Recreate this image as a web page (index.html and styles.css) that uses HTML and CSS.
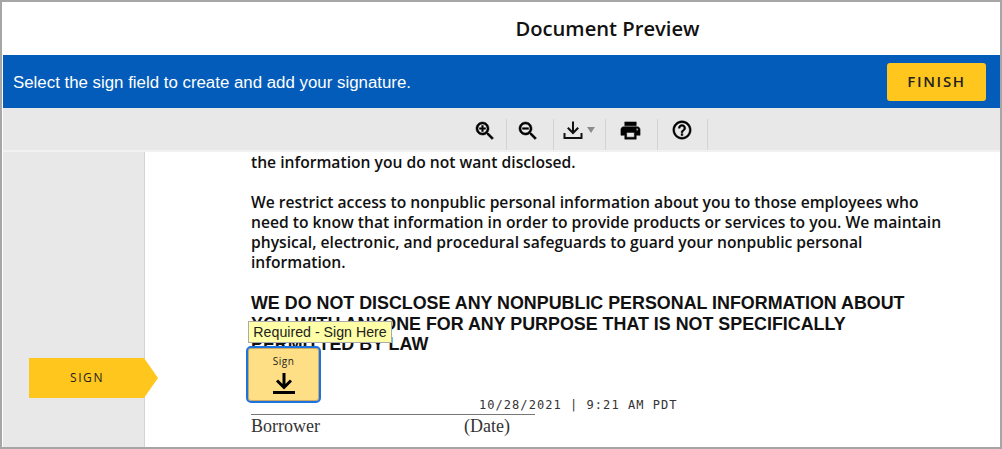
FILE: index.html
```html
<!doctype html>
<html lang="en">
<head>
	<meta charset="utf-8">
	<title>Document Preview</title>
	<link rel="stylesheet" href="styles.css">
</head>
<body>
	<div class="frame">
		<header class="title-bar">
			<h1>Document Preview</h1>
		</header>

		<section class="notice-bar">
			<p>Select the sign field to create and add your signature.</p>
			<button class="finish-button">FINISH</button>
		</section>

		<nav class="toolbar">
			<button class="tool tool-zoom-in" aria-label="Zoom in">
				<svg width="24" height="24" viewBox="0 0 24 24"><path d="M15.5 14h-.79l-.28-.27C15.41 12.59 16 11.11 16 9.5 16 5.91 13.09 3 9.5 3S3 5.91 3 9.5 5.91 16 9.5 16c1.61 0 3.09-.59 4.23-1.57l.27.28v.79l5 4.99L20.49 19l-4.99-5zm-6 0C7.01 14 5 11.99 5 9.5S7.01 5 9.5 5 14 7.01 14 9.5 11.99 14 9.5 14z"/><path d="M12.5 10.3h-2.2v2.2H8.7v-2.2H6.500V8.700h2.200V6.500h1.600v2.200h2.200z"/></svg>
			</button>
			<button class="tool tool-zoom-out" aria-label="Zoom out">
				<svg width="24" height="24" viewBox="0 0 24 24"><path d="M15.5 14h-.79l-.28-.27C15.41 12.59 16 11.11 16 9.5 16 5.91 13.09 3 9.5 3S3 5.91 3 9.5 5.91 16 9.5 16c1.61 0 3.09-.59 4.23-1.57l.27.28v.79l5 4.99L20.49 19l-4.99-5zm-6 0C7.01 14 5 11.99 5 9.5S7.01 5 9.5 5 14 7.01 14 9.5 11.99 14 9.5 14z"/><path d="M6.500 8.700h6v1.600h-6z"/></svg>
			</button>
			<button class="tool tool-download" aria-label="Download">
				<svg width="20" height="20" viewBox="0 0 20 20"><path d="M10 1.500v11M4.800 7.800l5.200 5.200 5.200-5.200M1.500 13v5h17v-5" fill="none" stroke="#111" stroke-width="2"/></svg>
				<span class="caret"></span>
			</button>
			<button class="tool tool-print" aria-label="Print">
				<svg width="23" height="23" viewBox="0 0 24 24"><path d="M19 8H5c-1.660 0-3 1.340-3 3v6h4v4h12v-4h4v-6c0-1.660-1.340-3-3-3zm-3 11H8v-5h8v5zm3-7c-.55 0-1-.45-1-1s.45-1 1-1 1 .45 1 1-.45 1-1 1zm-1-9H6v4h12V3z"/></svg>
			</button>
			<button class="tool tool-help" aria-label="Help">
				<svg width="22" height="22" viewBox="0 0 24 24"><path d="M11 18h2v-2h-2v2zm1-16C6.480 2 2 6.480 2 12s4.480 10 10 10 10-4.480 10-10S17.520 2 12 2zm0 18c-4.410 0-8-3.590-8-8s3.590-8 8-8 8 3.590 8 8-3.590 8-8 8zm0-14c-2.210 0-4 1.790-4 4h2c0-1.100.9-2 2-2s2 .9 2 2c0 2-3 1.750-3 5h2c0-2.250 3-2.500 3-5 0-2.210-1.790-4-4-4z"/></svg>
			</button>
		</nav>

		<main class="viewer">
			<aside class="sidebar">
				<div class="sign-tag">SIGN</div>
			</aside>

			<article class="doc">
				<p class="doc-text">the information you do not want disclosed.</p>
				<p class="doc-text">We restrict access to nonpublic personal information about you to those employees who<br>
				need to know that information in order to provide products or services to you. We maintain<br>
				physical, electronic, and procedural safeguards to guard your nonpublic personal<br>
				information.</p>
				<p class="doc-heading">WE DO NOT DISCLOSE ANY NONPUBLIC PERSONAL INFORMATION ABOUT<br>
				YOU WITH ANYONE FOR ANY PURPOSE THAT IS NOT SPECIFICALLY<br>
				PERMITTED BY LAW</p>
				<div class="signature-line">
					<span>Borrower</span>
					<span>(Date)</span>
				</div>

				<div class="tooltip">Required - Sign Here</div>
				<div class="sign-field">
					<span>Sign</span>
					<svg width="24" height="24" viewBox="0 0 24 24"><path d="M12 2v14M5 9.500l7 7 7-7" fill="none" stroke="#000" stroke-width="3"/><path d="M1 20h22v3H1z"/></svg>
				</div>
				<div class="date-stamp">10/28/2021 | 9:21 AM PDT</div>
			</article>
		</main>
	</div>
</body>
</html>
```

FILE: styles.css
```css
:root {
	--blue: #035cb9;
	--yellow: #ffc61e;
	--panel: #e8e8e8;
	--line: #d3d3d3;
	--ui-font: "Open Sans", "Noto Sans", sans-serif;
}

html, body {
	margin: 0;
	height: 100%;
	background-color: #fff;
}

.frame {
	box-sizing: border-box;
	height: 449px;
	border: 2px solid #a6a6a6;
	display: flex;
	flex-direction: column;
	overflow: hidden;
}

button {
	font-family: inherit;
	border: 0;
	padding: 0;
	background: none;
}

/* title */
.title-bar {
	flex: none;
	height: 53px;
	display: flex;
	align-items: center;
	justify-content: center;
	padding: 0 0 1px 213px;
	box-sizing: border-box;
}
.title-bar h1 {
	margin: 0;
	font-family: var(--ui-font);
	font-size: 20.200px;
	font-weight: 600;
	color: #111;
}

/* blue bar */
.notice-bar {
	flex: none;
	box-sizing: border-box;
	height: 53px;
	margin-left: 1px;
	background-color: var(--blue);
	display: flex;
	align-items: center;
	justify-content: space-between;
	padding: 0 14px 0 10px;
}
.notice-bar p {
	margin: 2px 0 0;
	font-family: "Liberation Sans", sans-serif;
	font-size: 16.850px;
	color: #fff;
}
.finish-button {
	width: 99px;
	height: 38px;
	padding-bottom: 2px;
	border-radius: 3px;
	background-color: var(--yellow);
	color: #222;
	font-family: var(--ui-font);
	font-size: 15px;
	font-weight: 600;
	letter-spacing: 1.700px;
}

/* toolbar */
.toolbar {
	flex: none;
	box-sizing: border-box;
	height: 44px;
	margin-left: 1px;
	background-color: var(--panel);
	border-bottom: 2px solid #f1f1f1;
	display: flex;
	align-items: flex-end;
	padding-left: 460px;
}
.tool {
	box-sizing: border-box;
	height: 31px;
	border-right: 1px solid var(--line);
	display: flex;
	align-items: flex-start;
	justify-content: center;
}
.tool svg {
	display: block;
	stroke: #000;
	stroke-width: .5px;
}
.tool-zoom-in { width: 44px; }
.tool-zoom-out { width: 47px; padding-right: 4px; }
.tool-download { width: 52px; padding: 1px 2px 0 0; gap: 4px; }
.tool-print { width: 52px; padding-right: 2px; }
.tool-help { width: 50px; padding-right: 1px; }
.caret {
	width: 0;
	height: 0;
	margin-top: 7px;
	border-left: 4px solid transparent;
	border-right: 4px solid transparent;
	border-top: 6px solid #8c8c8c;
}

/* viewer */
.viewer {
	flex: 1;
	min-height: 0;
	display: flex;
	margin-left: 1px;
}
.sidebar {
	flex: none;
	box-sizing: border-box;
	width: 142px;
	background-color: var(--panel);
	border-right: 1px solid var(--line);
	padding: 206px 0 0 26px;
}
.sign-tag {
	box-sizing: border-box;
	width: 129px;
	height: 40px;
	padding-right: 13px;
	background-color: var(--yellow);
	clip-path: polygon(0 0, 115px 0, 100% 50%, 115px 100%, 0 100%);
	font-family: var(--ui-font);
	font-size: 12px;
	font-weight: 500;
	letter-spacing: 1.600px;
	line-height: 40px;
	text-align: center;
	color: #222;
	position: relative;
}

.doc {
	flex: 1;
	position: relative;
	padding-left: 106px;
	color: #111;
	white-space: nowrap;
}
.doc-text {
	margin: 0 0 20px;
	font-family: "Open Sans", sans-serif;
	font-size: 15.650px;
	font-weight: 600;
	line-height: 20px;
}
.doc-heading {
	margin: 21px 0 0;
	font-family: "Liberation Sans", sans-serif;
	font-size: 17.880px;
	font-weight: bold;
	line-height: 20.500px;
}
.signature-line {
	width: 284px;
	margin-top: 59px;
	border-top: 1px solid #777;
	font-family: "Liberation Serif", serif;
	font-size: 18px;
	line-height: 22px;
	color: #333;
	display: flex;
	gap: 144px;
}

/* overlays on the page */
.tooltip {
	position: absolute;
	left: 103px;
	top: 169px;
	box-sizing: border-box;
	width: 144px;
	height: 22px;
	background-color: #ffffa8;
	border: 1px solid #aaa;
	font-family: "Liberation Sans", sans-serif;
	font-size: 14.200px;
	line-height: 20px;
	text-align: center;
	color: #222;
}
.sign-field {
	position: absolute;
	left: 101px;
	top: 194px;
	box-sizing: border-box;
	width: 75px;
	height: 57px;
	border: 2px solid #1a73e0;
	border-radius: 5px;
	background-color: #ffdf85;
	box-shadow: inset 0 0 0 1px #c9a868;
	display: flex;
	flex-direction: column;
	align-items: center;
	gap: 3px;
	font-family: var(--ui-font);
	font-size: 10px;
	line-height: 14px;
	letter-spacing: .5px;
	padding-top: 6px;
	color: #222;
}
.date-stamp {
	position: absolute;
	left: 334px;
	top: 245px;
	font-family: "DejaVu Sans Mono", "Liberation Mono", monospace;
	font-size: 12px;
	letter-spacing: 1.050px;
	line-height: 16px;
	color: #333;
}
```
